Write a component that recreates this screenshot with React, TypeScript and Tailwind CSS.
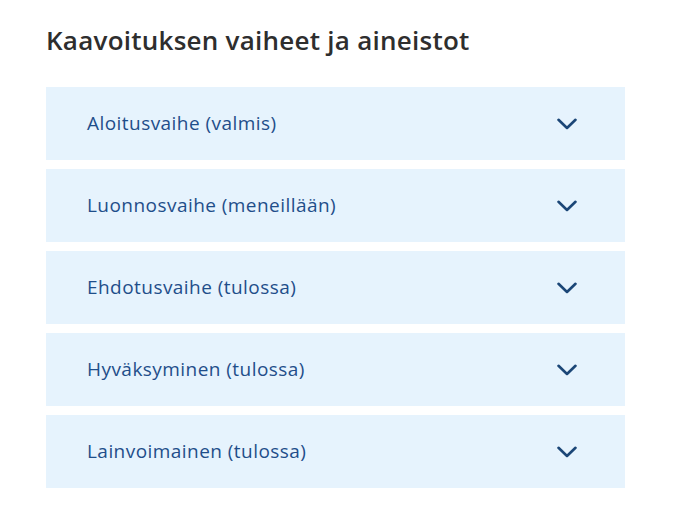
import React from 'react';

const phases = [
  'Aloitusvaihe (valmis)',
  'Luonnosvaihe (meneillään)',
  'Ehdotusvaihe (tulossa)',
  'Hyväksyminen (tulossa)',
  'Lainvoimainen (tulossa)',
];

const Chevron = () => (
  <svg width="20" height="12" viewBox="0 0 20 12" fill="none" className="shrink-0">
    <path d="M1.5 1.8 L10 10 L18.5 1.8" stroke="#1b4677" strokeWidth="2.6" strokeLinecap="round" strokeLinejoin="round" />
  </svg>
);

export default function App() {
  return (
    <div className="min-h-[514px] w-[681px] bg-white font-['Open_Sans',sans-serif]">
      <div className="pl-[46px] pr-[56px] pt-[21px]">
        <h2 className="text-[26px] font-semibold leading-[38px] text-[#2e2e2e] tracking-[0.25px]">
          Kaavoituksen vaiheet ja aineistot
        </h2>
        <div className="mt-[28px] flex flex-col gap-[9px]">
          {phases.map((p) => (
            <button
              key={p}
              className="flex h-[73px] w-[579px] items-center justify-between bg-[#e6f3fd] pl-[41px] pr-[48px] text-left"
            >
              <span className="text-[19px] tracking-[0.45px] text-[#1f4e8a]">{p}</span>
              <Chevron />
            </button>
          ))}
        </div>
      </div>
    </div>
  );
}
